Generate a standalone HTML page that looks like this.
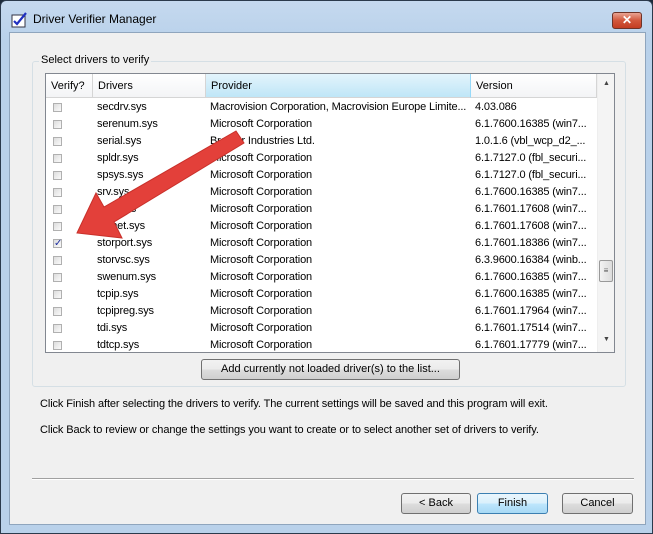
<!DOCTYPE html>
<html><head><style>
*{margin:0;padding:0;box-sizing:border-box}
body{width:653px;height:534px;background:#1c2a3a;font-family:"Liberation Sans",sans-serif;font-size:11px;color:#000;position:relative;overflow:hidden}
.win{position:absolute;left:0;top:0;width:653px;height:534px;background:linear-gradient(#c5d9ef,#b9d1ea 40px,#b9d1ea);border:1px solid #2b3a4c;border-radius:6px 6px 0 0}
.title{position:absolute;left:32px;top:11px;font-size:12px;color:#000}
.close{position:absolute;left:611px;top:11px;width:30px;height:17px;border:1px solid #6d3328;border-radius:3px;background:linear-gradient(#e9a493,#d2573c 50%,#c33d22);color:#fff;font-weight:bold;text-align:center;font-size:12px;line-height:15px}
.client{position:absolute;left:8px;top:31px;width:637px;height:493px;background:#f0f0f0;border:1px solid #8fa5bd}
.group{position:absolute;left:31px;top:60px;width:594px;height:326px;border:1px solid #d5dfe5;border-radius:3px}
.glabel{position:absolute;left:38px;top:53px;background:#f0f0f0;padding:0 2px;font-size:11px}
.list{position:absolute;left:44px;top:72px;width:570px;height:280px;border:1px solid #828790;background:#fff;overflow:hidden}
.hdr{position:absolute;top:0;height:24px;border-right:1px solid #d5d5d5;background:linear-gradient(#fff,#f3f4f6);line-height:24px;padding-left:5px;border-bottom:1px solid #d5d5d5}
.row{position:absolute;left:0;height:17px;line-height:17px;width:551px;letter-spacing:-0.15px}
.row span{position:absolute;white-space:nowrap}
.cb{position:absolute;left:8px;top:4px;width:9px;height:9px;border:1px solid #b0b0b0;background:linear-gradient(135deg,#ddd,#fafafa)}
.sb{position:absolute;left:551px;top:0;width:17px;height:278px;background:#f4f4f4;border-left:1px solid #eee}
.btn{position:absolute;height:21px;border:1px solid #707070;border-radius:3px;background:linear-gradient(#f2f2f2,#ebebeb 50%,#dddddd 51%,#cfcfcf);text-align:center;line-height:19px;font-size:11px}
.txt{position:absolute;left:39px;font-size:11px;letter-spacing:-0.1px}
</style></head><body>
<div class="win">
<svg style="position:absolute;left:10px;top:11px" width="17" height="17"><rect x="1" y="3" width="13" height="12" fill="#fff" stroke="#334" /><path d="M3 9l3 3 9-11" stroke="#2030c0" stroke-width="2.2" fill="none"/></svg>
<div class="title">Driver Verifier Manager</div>
<div class="close">✕</div>
<div class="client"></div>
<div class="group"></div>
<div class="glabel">Select drivers to verify</div>
<div class="list">
<div class="hdr" style="left:0;width:47px">Verify?</div>
<div class="hdr" style="left:47px;width:113px">Drivers</div>
<div class="hdr" style="left:160px;width:265px;background:linear-gradient(#e3f4fc,#bfe6f7);border-right:1px solid #96d9f9">Provider</div>
<div class="hdr" style="left:425px;width:126px">Version</div>
<div class="sb"><div style="position:absolute;left:5px;top:6px;font-size:7px;color:#444">▲</div><div style="position:absolute;left:1px;top:186px;width:14px;height:22px;border:1px solid #999;border-radius:2px;background:linear-gradient(90deg,#f3f3f3,#dcdcdc);font-size:8px;text-align:center;line-height:20px;color:#555">≡</div><div style="position:absolute;left:5px;top:262px;font-size:7px;color:#444">▼</div></div>
</div>
<div class="btn" style="left:200px;top:358px;width:259px">Add currently not loaded driver(s) to the list...</div>
<div class="txt" style="top:397px">Click Finish after selecting the drivers to verify. The current settings will be saved and this program will exit.</div>
<div class="txt" style="top:423px">Click Back to review or change the settings you want to create or to select another set of drivers to verify.</div>
<div style="position:absolute;left:31px;top:477px;width:602px;height:2px;border-top:1px solid #a0a0a0;border-bottom:1px solid #fff"></div>
<div class="btn" style="left:400px;top:492px;width:70px">&lt; Back</div>
<div class="btn" style="left:476px;top:492px;width:71px;border-color:#3c7fb1;background:linear-gradient(#eaf6fd,#d9f0fc 50%,#bee6fd 51%,#a7d9f5)">Finish</div>
<div class="btn" style="left:561px;top:492px;width:71px">Cancel</div>
</div>
<div class="list" style="background:transparent;border:none;left:45px;top:75px;pointer-events:none">
<div class="row" style="top:24px"><div class="cb"></div><span style="left:52px">secdrv.sys</span><span style="left:165px">Macrovision Corporation, Macrovision Europe Limite...</span><span style="left:430px">4.03.086</span></div>
<div class="row" style="top:41px"><div class="cb"></div><span style="left:52px">serenum.sys</span><span style="left:165px">Microsoft Corporation</span><span style="left:430px">6.1.7600.16385 (win7...</span></div>
<div class="row" style="top:58px"><div class="cb"></div><span style="left:52px">serial.sys</span><span style="left:165px">Brother Industries Ltd.</span><span style="left:430px">1.0.1.6 (vbl_wcp_d2_...</span></div>
<div class="row" style="top:75px"><div class="cb"></div><span style="left:52px">spldr.sys</span><span style="left:165px">Microsoft Corporation</span><span style="left:430px">6.1.7127.0 (fbl_securi...</span></div>
<div class="row" style="top:92px"><div class="cb"></div><span style="left:52px">spsys.sys</span><span style="left:165px">Microsoft Corporation</span><span style="left:430px">6.1.7127.0 (fbl_securi...</span></div>
<div class="row" style="top:109px"><div class="cb"></div><span style="left:52px">srv.sys</span><span style="left:165px">Microsoft Corporation</span><span style="left:430px">6.1.7600.16385 (win7...</span></div>
<div class="row" style="top:126px"><div class="cb"></div><span style="left:52px">srv2.sys</span><span style="left:165px">Microsoft Corporation</span><span style="left:430px">6.1.7601.17608 (win7...</span></div>
<div class="row" style="top:143px"><div class="cb"></div><span style="left:52px">srvnet.sys</span><span style="left:165px">Microsoft Corporation</span><span style="left:430px">6.1.7601.17608 (win7...</span></div>
<div class="row" style="top:160px"><div class="cb" style="color:#2030a0;font-size:10px;line-height:8px;text-align:center">✓</div><span style="left:52px">storport.sys</span><span style="left:165px">Microsoft Corporation</span><span style="left:430px">6.1.7601.18386 (win7...</span></div>
<div class="row" style="top:177px"><div class="cb"></div><span style="left:52px">storvsc.sys</span><span style="left:165px">Microsoft Corporation</span><span style="left:430px">6.3.9600.16384 (winb...</span></div>
<div class="row" style="top:194px"><div class="cb"></div><span style="left:52px">swenum.sys</span><span style="left:165px">Microsoft Corporation</span><span style="left:430px">6.1.7600.16385 (win7...</span></div>
<div class="row" style="top:211px"><div class="cb"></div><span style="left:52px">tcpip.sys</span><span style="left:165px">Microsoft Corporation</span><span style="left:430px">6.1.7600.16385 (win7...</span></div>
<div class="row" style="top:228px"><div class="cb"></div><span style="left:52px">tcpipreg.sys</span><span style="left:165px">Microsoft Corporation</span><span style="left:430px">6.1.7601.17964 (win7...</span></div>
<div class="row" style="top:245px"><div class="cb"></div><span style="left:52px">tdi.sys</span><span style="left:165px">Microsoft Corporation</span><span style="left:430px">6.1.7601.17514 (win7...</span></div>
<div class="row" style="top:262px"><div class="cb"></div><span style="left:52px">tdtcp.sys</span><span style="left:165px">Microsoft Corporation</span><span style="left:430px">6.1.7601.17779 (win7...</span></div>
</div>
<svg style="position:absolute;left:0;top:0" width="653" height="534"><polygon points="236,131 244,143 114,222 122,238 77,233 96,193 104,207" fill="#e3403a" stroke="#c8302a" stroke-width="1"/></svg>
</body></html>
